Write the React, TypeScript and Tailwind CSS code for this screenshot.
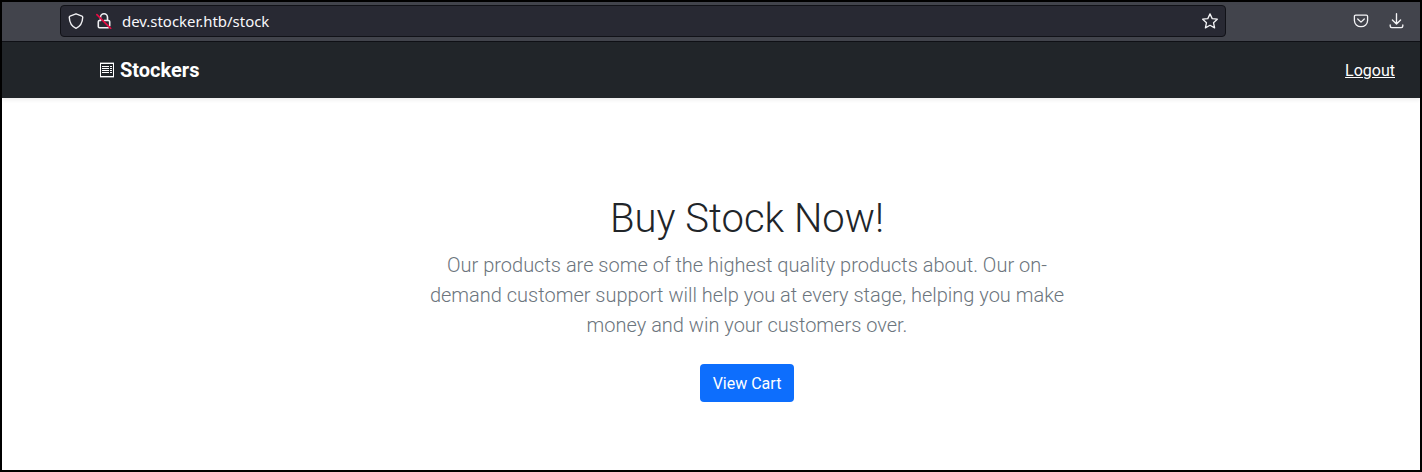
import React from "react";

function ShieldIcon() {
  return (
    <svg width="16" height="16" viewBox="0 0 16 16" fill="none" stroke="#f0f0f3" strokeWidth="1.4" strokeLinejoin="round" strokeLinecap="round">
      <path d="M8 .8 L14 3.2 Q14.8 3.5 14.7 4.5 C14.5 9.5 12 13.5 8 15.3 C4 13.5 1.5 9.5 1.3 4.5 Q1.2 3.5 2 3.2 Z" />
    </svg>
  );
}

function InsecureIcon() {
  return (
    <svg width="16" height="16" viewBox="0 0 16 16" fill="none" strokeLinecap="round">
      <path d="M4.5 7.3V4.3a3.5 3.5 0 0 1 7 0V7.3M8.4 7.5h4.1q1.2 0 1.2 1.2v4M4.8 7.5H3.5q-1.2 0-1.2 1.2v4.8q0 1.2 1.2 1.2h8.8" stroke="#f0f0f3" strokeWidth="1.6" />
      <path d="M.9 1.7 14.6 15.4" stroke="#e60b43" strokeWidth="1.7" />
    </svg>
  );
}

function StarIcon() {
  return (
    <svg width="16" height="16" viewBox="0 0 16 16" fill="none" stroke="#f4f4f6" strokeWidth="1.3" strokeLinejoin="round">
      <path d="M8 .9 10.2 5.6 15.3 6.2 11.5 9.7 12.6 14.9 8 12.3 3.4 14.9 4.5 9.7 .7 6.2 5.8 5.6Z" />
    </svg>
  );
}

function PocketIcon() {
  return (
    <svg width="16" height="16" viewBox="0 0 16 16" fill="none" stroke="#f4f4f6" strokeWidth="1.3" strokeLinejoin="round" strokeLinecap="round">
      <path d="M2.7 2.2h10.6q1.3 0 1.3 1.3v4.1a6.6 6.1 0 0 1-13.2 0V3.5q0-1.3 1.3-1.3Z" />
      <path d="M4.7 6 8 9.1 11.3 6" />
    </svg>
  );
}

function DownloadIcon() {
  return (
    <svg width="16" height="16" viewBox="0 0 16 16" fill="none" stroke="#f4f4f6" strokeWidth="1.35" strokeLinejoin="round" strokeLinecap="round">
      <path d="M7.5 .7v10M3.4 6.9 7.5 11 11.6 6.9M1.2 12v1.1q0 1.5 1.5 1.5h9.6q1.5 0 1.5-1.5V12" />
    </svg>
  );
}

function NewsIcon() {
  return (
    <svg width="14" height="16" viewBox="0 0 14 16" fill="none" stroke="#fff" shapeRendering="crispEdges">
      <path d="M0 .5h14M0 15.5h14" stroke="#777a7d" />
      <path d="M.5 1.5h13v13H.5Z" />
      <path d="M2 4.5h7M2 6.5h7M2 8.5h7M2 10.5h7M10 4.5h2M10 6.5h2M10 8.5h2M10 10.5h2" />
    </svg>
  );
}

function BrowserBar() {
  return (
    <div className="flex h-10 items-start border-b border-[#101116] bg-[#42444c] pt-[3px] pl-[58px]">
      <div className="flex h-8 w-[1166px] items-center rounded-[4px] border border-[#111218] bg-[#282933] pr-[7px] pl-[7px]">
        <ShieldIcon />
        <div className="ml-3">
          <InsecureIcon />
        </div>
        <span className="ml-[10px] font-['Noto_Sans',sans-serif] text-[14.95px] leading-5 text-[#f8f8fb]">dev.stocker.htb/stock</span>
        <div className="ml-auto">
          <StarIcon />
        </div>
      </div>
      <div className="ml-[127px] flex h-8 items-center gap-5">
        <PocketIcon />
        <DownloadIcon />
      </div>
    </div>
  );
}

function Navbar() {
  return (
    <header className="flex h-14 items-center justify-between bg-[#212529] pr-[25px] pl-[98px] text-white shadow-[0_2px_4px_rgba(0,0,0,0.075)]">
      <a className="flex items-center gap-[6px] text-xl font-bold" href="#">
        <NewsIcon />
        <span>Stockers</span>
      </a>
      <a className="pt-px text-base underline" href="#">Logout</a>
    </header>
  );
}

export default function App() {
  return (
    <div className="h-[472px] w-[1422px] border-2 border-black bg-white font-['Roboto',sans-serif]">
      <BrowserBar />
      <Navbar />
      <main className="flex flex-col items-center pt-[97px] pl-[72px] text-center">
        <h1 className="text-[40px] leading-12 font-light text-[#212529]">Buy Stock Now!</h1>
        <p className="mt-[7px] w-[644px] text-xl leading-[30px] font-light text-[#6c757d]">
          Our products are some of the highest quality products about. Our on-demand customer support will help you at every stage, helping you make money and win your customers over.
        </p>
        <button className="mt-6 h-[38px] w-[94px] rounded-[4px] bg-[#0d6efd] pt-0.5 text-base text-white">View Cart</button>
      </main>
    </div>
  );
}
